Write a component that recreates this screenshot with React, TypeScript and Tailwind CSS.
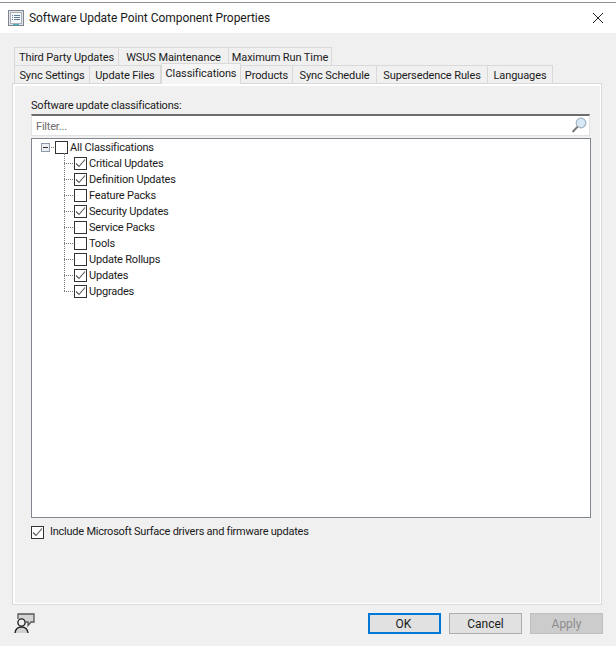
const TOP_TABS = [
  { label: 'Third Party Updates', width: 'w-[105px]' },
  { label: 'WSUS Maintenance', width: 'w-[110px]' },
  { label: 'Maximum Run Time', width: 'w-[103px]' },
]

const BOTTOM_TABS = [
  { label: 'Sync Settings', width: 'w-[76px]' },
  { label: 'Update Files', width: 'w-[71px]' },
  { label: 'Classifications', width: 'w-[80px]', active: true },
  { label: 'Products', width: 'w-[52px]' },
  { label: 'Sync Schedule', width: 'w-[84px]' },
  { label: 'Supersedence Rules', width: 'w-[111px]' },
  { label: 'Languages', width: 'w-[65px]' },
]

const CLASSIFICATIONS = [
  { label: 'Critical Updates', checked: true },
  { label: 'Definition Updates', checked: true },
  { label: 'Feature Packs', checked: false },
  { label: 'Security Updates', checked: true },
  { label: 'Service Packs', checked: false },
  { label: 'Tools', checked: false },
  { label: 'Update Rollups', checked: false },
  { label: 'Updates', checked: true },
  { label: 'Upgrades', checked: true },
]

function Checkbox({ checked }: { checked: boolean }) {
  return (
    <span className="size-[13px] shrink-0 bg-white border border-[#333333] flex items-center justify-center">
      {checked && (
        <svg width="11" height="11" viewBox="0 0 11 11" fill="none">
          <path d="M1 5.5 L4 8.5 L10 1.5" stroke="#555555" strokeWidth="1.1" />
        </svg>
      )}
    </span>
  )
}

function Tab({ label, width, active }: { label: string; width: string; active?: boolean }) {
  if (active) {
    return (
      <div
        className={`${width} h-[21px] -mt-[2px] -mb-px z-10 bg-[#f5f5f5] border-x border-t border-[#d9d9d9] flex items-center justify-center whitespace-nowrap tracking-[-0.1px]`}
      >
        {label}
      </div>
    )
  }
  return (
    <div
      className={`${width} h-[18px] pt-[2px] bg-[#f0f0f0] border-t border-r first:border-l border-[#d9d9d9] flex items-center justify-center whitespace-nowrap tracking-[-0.1px]`}
    >
      {label}
    </div>
  )
}

export default function App() {
  return (
    <div className="w-[616px] h-[646px] bg-[#f0f0f0] flex flex-col overflow-hidden text-[11px] leading-4 tracking-[-0.2px] text-[#1a1a1a] font-['Roboto',sans-serif]">
      {/* Strip of the window behind */}
      <div className="h-[3px] shrink-0 bg-white border-b border-[#8f8f8f]" />

      {/* Title bar */}
      <div className="h-[30px] shrink-0 bg-white flex items-center pl-[8px] pr-[12px]">
        <svg width="16" height="16" viewBox="0 0 16 16" fill="none" className="shrink-0">
          <rect x="0.5" y="0.5" width="15" height="15" fill="#dfe3e7" stroke="#80868d" />
          <rect x="2.5" y="2.5" width="11" height="11" fill="#f6f8fa" stroke="#aab1b9" />
          <path d="M4 5.5h1M6 5.5h6M4 7.5h1M6 7.5h6M4 9.5h1M6 9.5h6" stroke="#5f7f9f" />
          <path d="M5 14.5h6" stroke="#38b6c8" />
        </svg>
        <span className="ml-[5px] text-[12px] tracking-[-0.05px]">Software Update Point Component Properties</span>
        <svg width="12" height="12" viewBox="0 0 12 12" fill="none" className="ml-auto">
          <path d="M1 1 L11 11 M11 1 L1 11" stroke="#222222" strokeWidth="1" />
        </svg>
      </div>

      {/* Tabs */}
      <div className="mt-[14px] pl-[14px] flex shrink-0">
        {TOP_TABS.map(tab => (
          <Tab key={tab.label} {...tab} />
        ))}
      </div>
      <div className="pl-[14px] flex shrink-0 relative">
        {BOTTOM_TABS.map(tab => (
          <Tab key={tab.label} {...tab} />
        ))}
      </div>

      {/* Tab panel */}
      <div className="ml-[12px] w-[590px] h-[522px] shrink-0 border border-[#d9d9d9] bg-[#f0f0f0] shadow-[inset_2px_2px_0_#ffffff,inset_-1px_-1px_0_#ffffff] pl-[18px] pr-[11px] pt-[14px] flex flex-col">
        <div className="h-4">Software update classifications:</div>
        <div className="h-[22px] bg-white border border-[#e3e3e3] border-t-[#6d6d6d] border-t-2 flex items-center pl-[4px] pr-[2px] text-[#6d6d6d]">
          <span className="pt-[3px]">Filter...</span>
          <svg width="16" height="17" viewBox="0 0 16 17" fill="none" className="ml-auto">
            <circle cx="10" cy="6" r="4.8" fill="#d6e8f5" stroke="#9fb3c2" strokeWidth="1.2" />
            <path d="M6.6 9.6 L1.6 15" stroke="#777777" strokeWidth="2" />
          </svg>
        </div>

        {/* Classification tree */}
        <div className="mt-[2px] h-[380px] w-[560px] bg-white border border-[#82878f] relative">
          <div className="flex items-center h-4 pl-[9px]">
            <span className="size-[9px] shrink-0 border border-[#8f9aa8] bg-[#eceff3] flex items-center justify-center">
              <span className="w-[5px] h-px bg-[#333333]" />
            </span>
            <span className="w-[3px] mx-px shrink-0 border-t border-dotted border-[#777777]" />
            <Checkbox checked={false} />
            <span className="ml-[2px] pt-[2px]">All Classifications</span>
          </div>
          {CLASSIFICATIONS.map(item => (
            <div key={item.label} className="flex items-center h-4 pl-[32px]">
              <span className="w-[9px] mr-px shrink-0 border-t border-dotted border-[#777777]" />
              <Checkbox checked={item.checked} />
              <span className="ml-[2px] pt-[2px]">{item.label}</span>
            </div>
          ))}
          <div className="absolute left-[32px] top-[14px] h-[138px] border-l border-dotted border-[#777777]" />
        </div>

        <div className="mt-[6px] flex items-center h-4">
          <Checkbox checked />
          <span className="ml-[6px] tracking-[-0.24px]">Include Microsoft Surface drivers and firmware updates</span>
        </div>
      </div>

      {/* Footer */}
      <div className="mt-[8px] pl-[14px] pr-[13px] flex items-center shrink-0">
        <svg width="21" height="21" viewBox="0 0 21 21" fill="none" className="shrink-0">
          <path d="M4 6 V1 H20 V9 H17 L14 12.5 V9 H12" fill="#d4d4d4" stroke="#555555" strokeWidth="1.3" />
          <circle cx="7.5" cy="9.5" r="3.6" fill="#f0f0f0" stroke="#222222" strokeWidth="1.4" />
          <path d="M1 20 C1.5 16 4 14 7.5 14 C11 14 13.5 16 14 20 Z" fill="#d0d0d0" />
          <path d="M1 20 C1.5 16 4 14 7.5 14 C11 14 13.5 16 14 20" stroke="#222222" strokeWidth="1.4" />
        </svg>
        <button className="ml-auto w-[73px] h-[21px] pr-[2px] bg-[#e1e1e1] border-2 border-[#0078d7] text-[12px] tracking-[0px]">OK</button>
        <button className="ml-[8px] w-[73px] h-[21px] bg-[#e1e1e1] border border-[#adadad] text-[12px] tracking-[0px]">Cancel</button>
        <button className="ml-[8px] w-[73px] h-[21px] bg-[#cccccc] border border-[#bfbfbf] text-[#8c8c8c] text-[12px] tracking-[0px]">Apply</button>
      </div>
    </div>
  )
}
